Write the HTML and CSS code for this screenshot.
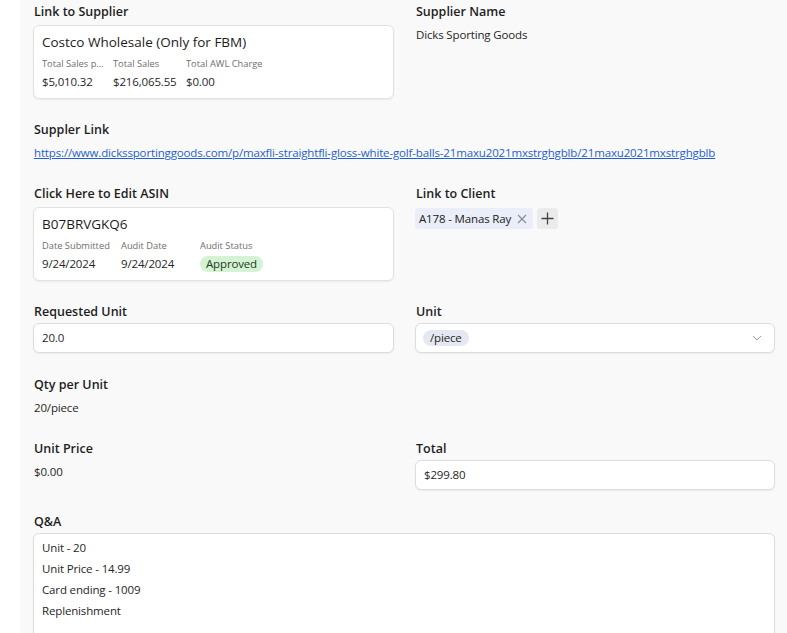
FILE: index.html
```html
<!DOCTYPE html>
<html lang="en">

<head>
    <meta charset="UTF-8">
    <meta name="viewport" content="width=device-width, initial-scale=1.0">
    <title>Purchase Request</title>
    <link rel="stylesheet" href="styles.css">
</head>

<body>
    <div class="panel">
        <div class="form">
            <div class="field">
                <div class="label">Link to Supplier</div>
                <div class="card">
                    <div class="card-title">Costco Wholesale (Only for FBM)</div>
                    <div class="stats">
                        <div class="stat w63">
                            <div class="stat-label">Total Sales per Month</div>
                            <div class="stat-value">$5,010.32</div>
                        </div>
                        <div class="stat w65">
                            <div class="stat-label">Total Sales</div>
                            <div class="stat-value">$216,065.55</div>
                        </div>
                        <div class="stat">
                            <div class="stat-label">Total AWL Charge</div>
                            <div class="stat-value">$0.00</div>
                        </div>
                    </div>
                </div>
            </div>
            <div class="field">
                <div class="label">Supplier Name</div>
                <div class="value">Dicks Sporting Goods</div>
            </div>

            <div class="field wide">
                <div class="label">Suppler Link</div>
                <div class="value"><a href="#">https://www.dickssportinggoods.com/p/maxfli-straightfli-gloss-white-golf-balls-21maxu2021mxstrghgblb/21maxu2021mxstrghgblb</a></div>
            </div>

            <div class="field">
                <div class="label">Click Here to Edit ASIN</div>
                <div class="card">
                    <div class="card-title">B07BRVGKQ6</div>
                    <div class="stats">
                        <div class="stat w71">
                            <div class="stat-label">Date Submitted</div>
                            <div class="stat-value">9/24/2024</div>
                        </div>
                        <div class="stat w71">
                            <div class="stat-label">Audit Date</div>
                            <div class="stat-value">9/24/2024</div>
                        </div>
                        <div class="stat">
                            <div class="stat-label">Audit Status</div>
                            <div class="stat-value"><span class="badge">Approved</span></div>
                        </div>
                    </div>
                </div>
            </div>
            <div class="field">
                <div class="label">Link to Client</div>
                <div class="chips">
                    <span class="chip">A178 - Manas Ray
                        <svg width="10" height="10" viewBox="0 0 10 10"><path d="M1 1l8 8M9 1l-8 8" stroke="#8a8a8a" stroke-width="1.1" fill="none"/></svg>
                    </span>
                    <span class="add-btn">
                        <svg width="13" height="13" viewBox="0 0 13 13"><path d="M6.5 0.5v12M0.5 6.5h12" stroke="#444" stroke-width="1.3" fill="none"/></svg>
                    </span>
                </div>
            </div>

            <div class="field">
                <div class="label">Requested Unit</div>
                <div class="input">20.0</div>
            </div>
            <div class="field">
                <div class="label">Unit</div>
                <div class="input select">
                    <span class="tag">/piece</span>
                    <svg width="10" height="6" viewBox="0 0 10 6"><path d="M1 1l4 4 4-4" stroke="#9a9a9a" stroke-width="1" fill="none"/></svg>
                </div>
            </div>

            <div class="field">
                <div class="label">Qty per Unit</div>
                <div class="value">20/piece</div>
            </div>
            <div></div>

            <div class="field">
                <div class="label">Unit Price</div>
                <div class="value">$0.00</div>
            </div>
            <div class="field">
                <div class="label">Total</div>
                <div class="input">$299.80</div>
            </div>

            <div class="field wide">
                <div class="label">Q&amp;A</div>
                <div class="input textarea">Unit - 20<br>Unit Price - 14.99<br>Card ending - 1009<br>Replenishment<br><br><br></div>
            </div>
        </div>
    </div>
</body>

</html>
```

FILE: styles.css
```css
body {
    margin: 0;
    background-color: #ffffff;
    font-family: "Open Sans", "Noto Sans", Arial, sans-serif;
    color: #222;
}

.panel {
    margin-left: 20px;
    background-color: #f9f9f9;
    padding: 4px 12px 0 13px;
    height: 629px;
    overflow: hidden;
}

.form {
    display: grid;
    grid-template-columns: 361px 360px;
    column-gap: 21px;
    row-gap: 23px;
}

.wide {
    grid-column: 1 / 3;
}

.label {
    font-size: 12.5px;
    font-weight: 600;
    line-height: 16px;
    margin-left: 1px;
    color: #1e1e1e;
}

.value {
    font-size: 11.5px;
    letter-spacing: -0.15px;
    line-height: 20px;
    margin-top: 5px;
    margin-left: 1px;
    color: #262626;
}

.value a {
    color: #1f5fd1;
}

.card {
    margin-top: 5px;
    background-color: #fff;
    border: 1px solid #e2e2e2;
    border-radius: 6px;
    box-shadow: 0 1px 2px rgba(0, 0, 0, 0.06);
    padding: 6px 8px 7px 8px;
}

.card-title {
    font-size: 13.5px;
    font-weight: 500;
    line-height: 20px;
    color: #1b1b1b;
}

.stats {
    display: flex;
    gap: 8px;
    margin-top: 5px;
}

.stat {
    min-width: 0;
}

.w63 {
    width: 63px;
}

.w65 {
    width: 65px;
}

.w71 {
    width: 71px;
}

.stat-label {
    font-size: 9.3px;
    line-height: 14px;
    color: #6e6e6e;
    white-space: nowrap;
    overflow: hidden;
    text-overflow: ellipsis;
}

.stat-value {
    font-size: 11.5px;
    letter-spacing: -0.15px;
    line-height: 18px;
    margin-top: 2px;
    color: #262626;
    white-space: nowrap;
}

.badge {
    display: inline-block;
    background-color: #d3f3d3;
    color: #1f3a1f;
    border-radius: 8px;
    padding: 0 6px;
    line-height: 16px;
}

.chips {
    display: flex;
    gap: 4px;
    margin-top: 6px;
}

.chip {
    display: flex;
    align-items: center;
    gap: 6px;
    height: 21px;
    padding: 0 6px 0 4px;
    background-color: #e9eef9;
    border-radius: 3px;
    font-size: 11.5px;
    letter-spacing: -0.15px;
}

.add-btn {
    display: flex;
    align-items: center;
    justify-content: center;
    width: 21px;
    height: 21px;
    background-color: #ebebeb;
    border-radius: 3px;
}

.input {
    margin: 3px 0 1px;
    height: 30px;
    box-sizing: border-box;
    background-color: #fff;
    border: 1px solid #dddddd;
    border-radius: 6px;
    box-shadow: 0 1px 2px rgba(0, 0, 0, 0.06);
    padding: 0 8px;
    font-size: 11.5px;
    letter-spacing: -0.15px;
    line-height: 28px;
    color: #262626;
}

.select {
    display: flex;
    align-items: center;
    justify-content: space-between;
    padding: 0 12px 0 7px;
}

.tag {
    background-color: #e4e9f1;
    border-radius: 8px;
    padding: 0 7px;
    line-height: 16px;
}

.textarea {
    height: auto;
    padding: 3px 8px;
    line-height: 21px;
}
```
